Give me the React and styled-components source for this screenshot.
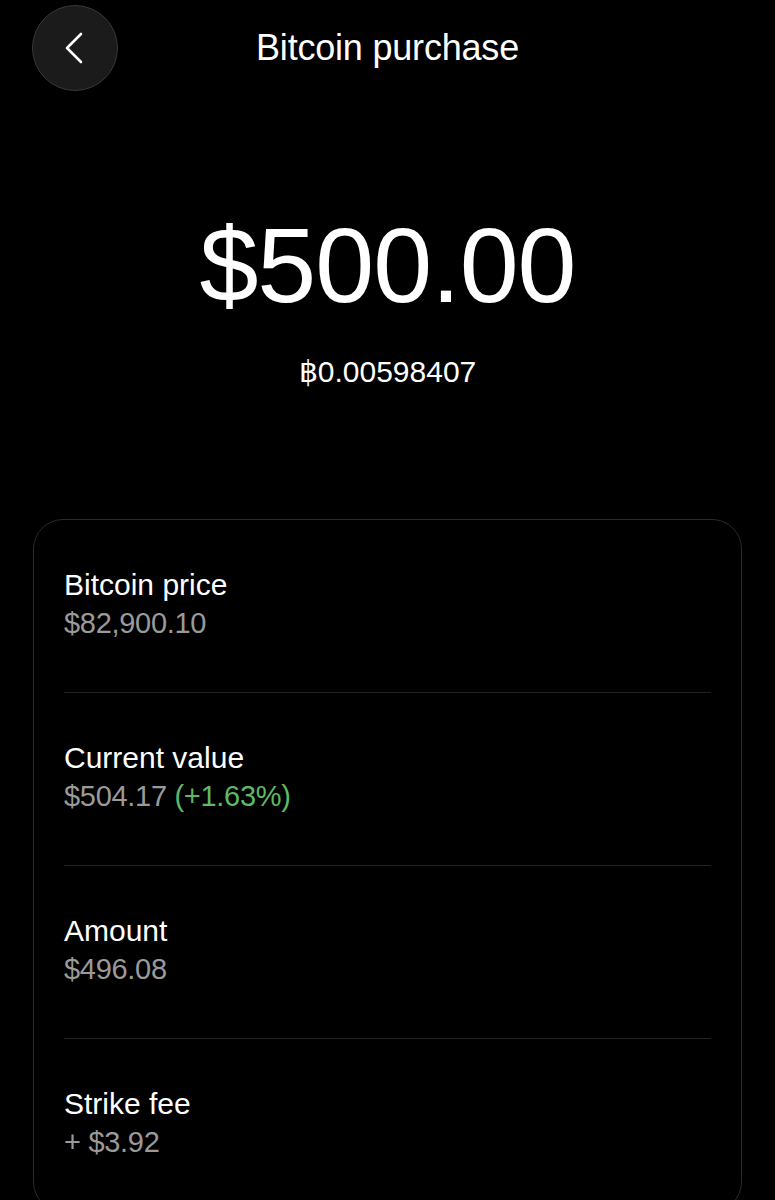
import React from 'react';
import styled, { createGlobalStyle } from 'styled-components';

const GlobalStyle = createGlobalStyle`
  html, body {
    margin: 0;
    padding: 0;
    background: #000;
  }
  body {
    font-family: 'Liberation Sans', Arial, sans-serif;
    color: #fff;
  }
`;

const Screen = styled('div')`
  display: flex;
  flex-direction: column;
  width: 775px;
  min-height: 1200px;
  background: #000;
  overflow: hidden;
`;

const Header = styled('div')`
  display: grid;
  grid-template-columns: 86px 1fr 86px;
  align-items: center;
  padding: 5px 32px 0;
  height: 86px;
`;

const BackButton = styled('button')`
  display: flex;
  align-items: center;
  justify-content: center;
  width: 86px;
  height: 86px;
  padding: 0;
  border-radius: 50%;
  background: #1b1b1b;
  border: 1px solid #383838;
  color: #fff;
`;

const Title = styled('h1')`
  margin: 0;
  text-align: center;
  font-size: 36px;
  font-weight: 400;
  letter-spacing: -0.2px;
`;

const Summary = styled('div')`
  display: flex;
  flex-direction: column;
  align-items: center;
  padding-top: 118px;
`;

const BigAmount = styled('div')`
  font-size: 106px;
  line-height: 112px;
  letter-spacing: -1px;
`;

const BtcAmount = styled('div')`
  margin-top: 34px;
  font-size: 30px;
  line-height: 34px;
`;

const Card = styled('div')`
  display: flex;
  flex-direction: column;
  margin: 130px 33px 0;
  padding: 0 30px;
  border: 1px solid #2a2a2a;
  border-radius: 30px;
`;

const Row = styled('div')`
  display: flex;
  flex-direction: column;
  padding: 46px 0 50px;
  border-top: ${(p) => (p.first ? 'none' : '1px solid #222')};
`;

const Label = styled('span')`
  font-size: 30px;
  line-height: 38px;
  color: #fff;
`;

const Value = styled('span')`
  font-size: 29px;
  line-height: 38px;
  color: #9a9a9a;
  letter-spacing: -0.3px;
`;

const Change = styled('span')`
  color: #5fb865;
`;

const rows = [
  { label: 'Bitcoin price', value: '$82,900.10' },
  { label: 'Current value', value: '$504.17', change: '(+1.63%)' },
  { label: 'Amount', value: '$496.08' },
  { label: 'Strike fee', value: '+ $3.92' }
];

const App = () => (
  <Screen>
    <GlobalStyle />
    <Header>
      <BackButton aria-label="Back">
        <svg width="20" height="32" viewBox="0 0 20 32" fill="none">
          <path
            d="M16 2 L2 16 L16 30"
            stroke="#fff"
            strokeWidth="2.6"
            strokeLinecap="round"
            strokeLinejoin="round"
          />
        </svg>
      </BackButton>
      <Title>Bitcoin purchase</Title>
      <span />
    </Header>
    <Summary>
      <BigAmount>$500.00</BigAmount>
      <BtcAmount>฿0.00598407</BtcAmount>
    </Summary>
    <Card>
      {rows.map((row, i) => (
        <Row key={row.label} first={i === 0}>
          <Label>{row.label}</Label>
          <Value>
            {row.value}
            {row.change && <Change> {row.change}</Change>}
          </Value>
        </Row>
      ))}
    </Card>
  </Screen>
);

export default App;
